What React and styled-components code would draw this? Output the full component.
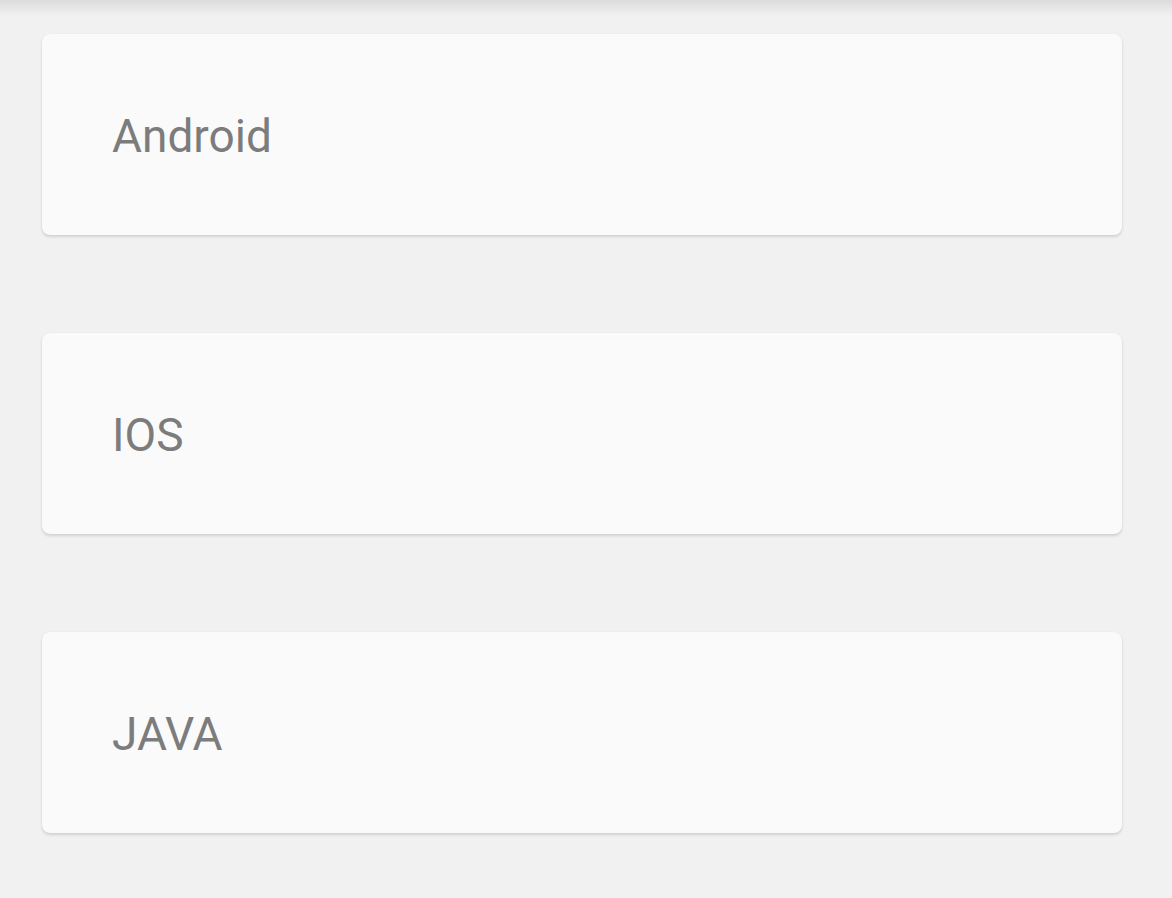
import React from "react";
import styled, { createGlobalStyle } from "styled-components";

const Global = createGlobalStyle`
  html, body { margin: 0; padding: 0; background: #f1f1f1; }
  body { font-family: Roboto, "Noto Sans", sans-serif; }
`;

const Page = styled.div`
  position: relative;
  min-height: 898px;
  background: #f1f1f1;
  padding: 34px 50px 0 42px;
  box-sizing: border-box;
  display: flex;
  flex-direction: column;
  gap: 98px;
  &::before {
    content: "";
    position: absolute;
    left: 0; right: 0; top: 0;
    height: 16px;
    background: linear-gradient(to bottom, rgba(0,0,0,0.09), rgba(0,0,0,0));
  }
`;

const Card = styled.div`
  height: 201px;
  background: #fafafa;
  border-radius: 8px;
  box-shadow: 0 2px 3px rgba(0,0,0,0.13), 0 0 1px rgba(0,0,0,0.08);
  display: flex;
  align-items: center;
  padding-left: 70px;
  padding-top: 2px;
  box-sizing: border-box;
`;

const Label = styled.span`
  font-size: 46px;
  color: #7c7c7c;
  font-family: Roboto, sans-serif;
`;

export default function App() {
  const items = ["Android", "IOS", "JAVA"];
  return (
    <>
      <Global />
      <Page>
        {items.map((t) => (
          <Card key={t}>
            <Label>{t}</Label>
          </Card>
        ))}
      </Page>
    </>
  );
}
